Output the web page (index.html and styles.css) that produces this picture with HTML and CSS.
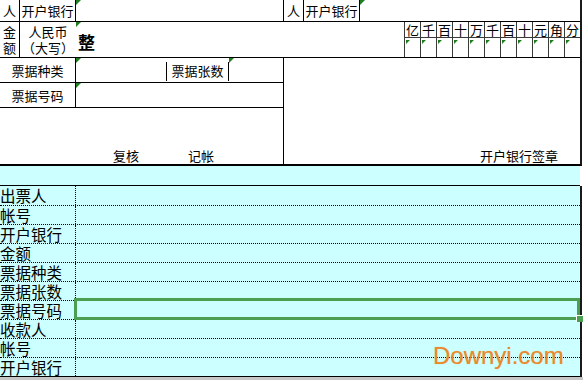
FILE: index.html
```html
<!DOCTYPE html>
<html lang="zh-CN">
<head>
<meta charset="utf-8">
<title>进账单</title>
<link rel="stylesheet" href="styles.css">
</head>
<body>
<div class="sheet">
  <div class="top">
    <div class="lbl br bb">人</div>
    <div class="lbl br bb">开户银行</div>
    <div class="cell mark br bb c3-6"></div>
    <div class="lbl br bb">人</div>
    <div class="lbl br bb">开户银行</div>
    <div class="cell mark bb c8-10"></div>

    <div class="stack br bb"><span>金</span><span>额</span></div>
    <div class="stack bb"><span>人民币</span><span>（大写）</span></div>
    <div class="cell mark amount bb c3-9">整</div>
    <div class="digits bb">
      <span class="dh">亿</span><span class="dh">千</span><span class="dh">百</span><span class="dh">十</span><span class="dh">万</span><span class="dh">千</span><span class="dh">百</span><span class="dh">十</span><span class="dh">元</span><span class="dh">角</span><span class="dh">分</span>
      <span class="dv"></span><span class="dv"></span><span class="dv"></span><span class="dv"></span><span class="dv"></span><span class="dv"></span><span class="dv"></span><span class="dv"></span><span class="dv"></span><span class="dv"></span><span class="dv"></span>
    </div>

    <div class="lbl br bb c1-3">票据种类</div>
    <div class="cell mark bb"></div>
    <div class="count bb"><span>票据张数</span></div>
    <div class="cell mark br bb"></div>
    <div class="bank-sign">开户银行签章</div>

    <div class="lbl br bb c1-3">票据号码</div>
    <div class="cell mark br bb c3-6"></div>

    <div class="sign br c1-6"><span>复核</span><span>记帐</span></div>
  </div>

  <div class="band"></div>

  <div class="rows">
    <div class="row first"><div class="name">出票人</div><div class="val"></div></div>
    <div class="row"><div class="name">帐号</div><div class="val"></div></div>
    <div class="row"><div class="name">开户银行</div><div class="val"></div></div>
    <div class="row"><div class="name">金额</div><div class="val"></div></div>
    <div class="row"><div class="name">票据种类</div><div class="val"></div></div>
    <div class="row"><div class="name">票据张数</div><div class="val"></div></div>
    <div class="row"><div class="name">票据号码</div><div class="val selected"></div></div>
    <div class="row"><div class="name">收款人</div><div class="val"></div></div>
    <div class="row"><div class="name">帐号</div><div class="val"></div></div>
    <div class="row last"><div class="name">开户银行</div><div class="val"></div></div>
  </div>

  <div class="statusbar"></div>

  <div class="watermark">Downyi.com</div>
</div>
</body>
</html>
```

FILE: styles.css
```css
* { box-sizing: border-box; margin: 0; padding: 0; }

html, body { background: #fff; }

body {
  width: 583px;
  height: 380px;
  overflow: hidden;
  font-family: "Noto Sans CJK SC", "Liberation Sans", sans-serif;
  color: #000;
}

.sheet { position: relative; width: 583px; }

.top {
  display: grid;
  grid-template-columns: 20px 56px 90px 63px 55px 20px 56px 44px 176px;
  grid-template-rows: 22px 36px 25px 25px 56px;
  width: 582px;
  border-right: 2px solid #1a1a1a;
  border-bottom: 2px solid #000;
  font-size: 13px;
  background: #fff;
}

.br { border-right: 1px solid #000; }
.bb { border-bottom: 1px solid #000; }

.c3-6 { grid-column: 3 / 6; }
.c8-10 { grid-column: 8 / 10; }
.c3-9 { grid-column: 3 / 9; }
.c1-3 { grid-column: 1 / 3; }
.c1-6 { grid-column: 1 / 6; }

.lbl {
  display: flex;
  align-items: center;
  justify-content: center;
  line-height: 15px;
  white-space: nowrap;
}

.cell { position: relative; }

.mark::before {
  content: "";
  position: absolute;
  left: 0;
  top: 0;
  border-top: 5px solid #1f7d1f;
  border-right: 5px solid transparent;
}

.stack {
  display: flex;
  flex-direction: column;
  align-items: center;
  justify-content: center;
  gap: 1px;
  white-space: nowrap;
}

.stack span {
  display: block;
  font-size: 13px;
  line-height: 15px;
  height: 15px;
}

.amount {
  font-size: 17px;
  font-weight: bold;
  line-height: 20px;
  padding: 10px 0 0 2px;
}

.digits {
  display: grid;
  grid-template-columns: repeat(11, 16px);
  grid-template-rows: 16px 19px;
  background: #fff;
}

.digits span { border-left: 1px solid #3a3a3a; position: relative; }

.dh {
  border-bottom: 1px solid #3a3a3a;
  text-align: center;
  line-height: 15px;
  font-size: 13px;
}

.dv::before {
  content: "";
  position: absolute;
  left: 1px;
  top: 2px;
  border-top: 4px solid #1f7d1f;
  border-right: 4px solid transparent;
}

.count {
  display: flex;
  align-items: flex-end;
  padding-bottom: 1px;
}

.count span {
  width: 63px;
  height: 19px;
  border-left: 1px solid #000;
  border-right: 1px solid #000;
  text-align: center;
  line-height: 18px;
  white-space: nowrap;
}

.bank-sign {
  grid-column: 6 / 10;
  grid-row: 3 / 6;
  display: flex;
  align-items: flex-end;
  justify-content: flex-end;
  padding: 0 22px 1px 0;
  line-height: 15px;
}

.sign {
  display: flex;
  align-items: flex-end;
  gap: 49px;
  padding: 0 0 1px 113px;
  line-height: 15px;
}

.band {
  width: 580px;
  height: 20px;
  background: #ccffff;
  border-bottom: 1px solid #000;
}

.rows {
  width: 582px;
  background: #ccffff;
  border-right: 2px solid #1a1a1a;
}

.row {
  display: grid;
  grid-template-columns: 76px 1fr;
  height: 19px;
  border-bottom: 1px dotted #000;
}

.row.first { height: 20px; }
.row.last { border-bottom: 1px solid #000; }

.name {
  border-right: 1px dotted #000;
  font-size: 15.5px;
  line-height: 18px;
  white-space: nowrap;
}

.row.first .name { line-height: 19px; }

.val { position: relative; }

.selected::after {
  content: "";
  position: absolute;
  top: -3px;
  bottom: -1px;
  left: -2px;
  right: 0;
  border: 3px solid #4a9f50;
}

.selected::before {
  content: "";
  position: absolute;
  right: -3px;
  bottom: -3px;
  width: 6px;
  height: 6px;
  background: #4a9f50;
  border-left: 1px solid #fff;
  border-top: 1px solid #fff;
  z-index: 1;
}

.statusbar {
  height: 10px;
  background: #c6c6c6;
}

.watermark {
  position: absolute;
  left: 433px;
  top: 344px;
  font-family: "Liberation Sans", Arial, sans-serif;
  font-size: 24px;
  line-height: 1;
  color: #e9892c;
  text-shadow: 0 0 1px rgba(233, 137, 44, 0.5);
}
```
